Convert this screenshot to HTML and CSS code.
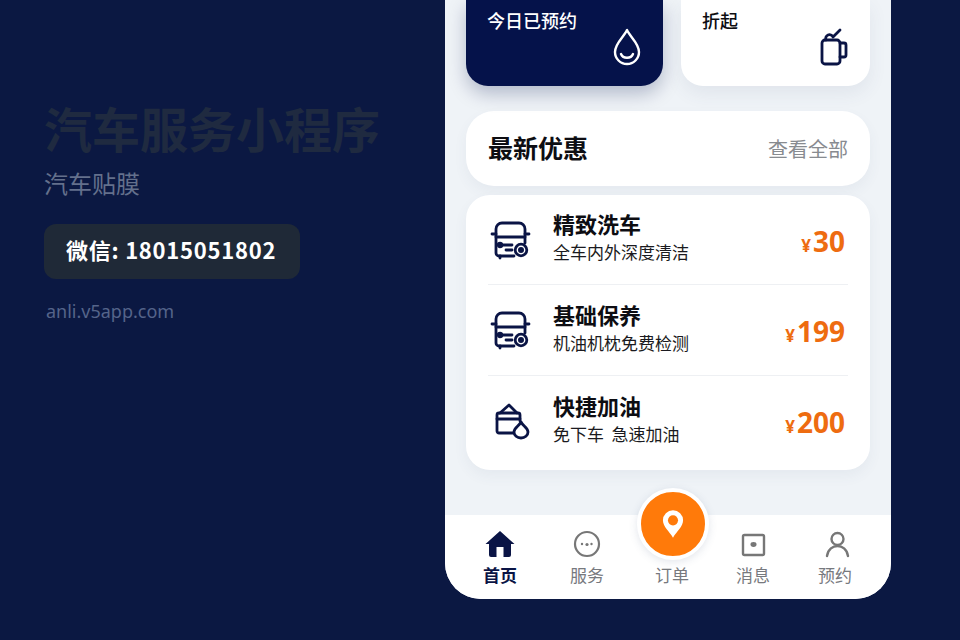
FILE: index.html
```html
<!DOCTYPE html>
<html lang="zh-CN">
<head>
    <meta charset="UTF-8">
    <title>汽车服务小程序</title>
    <link rel="stylesheet" href="styles.css">
</head>
<body>
    <div class="intro">
        <h1>汽车服务小程序</h1>
        <p class="subtitulo">汽车贴膜</p>
        <div class="wechat">微信: 18015051802</div>
        <p class="site">anli.v5app.com</p>
    </div>

    <div class="phone">
        <div class="content">
            <div class="top-cards">
                <div class="top-card dark">
                    <span>今日已预约</span>
                    <svg class="top-icon" width="28" height="38" viewBox="0 0 28 38" fill="none" stroke="#fff" stroke-width="2.4" stroke-linecap="round" stroke-linejoin="round">
                        <path d="M14 2 C11 9 2 15 2 24 A12 12 0 0 0 26 24 C26 15 17 9 14 2 Z"/>
                        <path d="M8 26 C10 31 18 31 20 26"/>
                    </svg>
                </div>
                <div class="top-card light">
                    <span>折起</span>
                    <svg class="top-icon" width="30" height="38" viewBox="0 0 30 38" fill="none" stroke="#0a1445" stroke-width="2.8" stroke-linecap="round" stroke-linejoin="round">
                        <rect x="4" y="12" width="18" height="24" rx="3"/>
                        <path d="M22 15 H26 A2 2 0 0 1 28 17 V27 A2 2 0 0 1 26 29 H22"/>
                        <path d="M8 12 A3.5 3.5 0 0 1 15 9 L22 2"/>
                    </svg>
                </div>
            </div>

            <div class="section-head">
                <h2>最新优惠</h2>
                <span>查看全部</span>
            </div>

            <div class="list">
                <div class="row">
                    <svg class="row-icon" width="42" height="42" viewBox="0 0 42 42" fill="none" stroke="#0a1445" stroke-width="2.8" stroke-linecap="round" stroke-linejoin="round">
                        <path d="M24 37 H9 A3 3 0 0 1 6 34 V10 A6 6 0 0 1 12 4 H29 A6 6 0 0 1 35 10 V24"/>
                        <path d="M6 18 H35"/>
                        <path d="M2 15 H6 M35 15 H39"/>
                        <path d="M11 26 H22 M16 31 H22"/>
                        <path d="M10 37 V39"/>
                        <circle cx="10" cy="26" r="1.8" fill="#0a1445"/>
                        <circle cx="31" cy="31" r="5.8" fill="#fff"/>
                        <circle cx="31" cy="31" r="1.6" fill="#0a1445"/>
                    </svg>
                    <div class="row-text">
                        <b>精致洗车</b>
                        <small>全车内外深度清洁</small>
                    </div>
                    <div class="price"><i>¥</i>30</div>
                </div>
                <div class="row">
                    <svg class="row-icon" width="42" height="42" viewBox="0 0 42 42" fill="none" stroke="#0a1445" stroke-width="2.8" stroke-linecap="round" stroke-linejoin="round">
                        <path d="M24 37 H9 A3 3 0 0 1 6 34 V10 A6 6 0 0 1 12 4 H29 A6 6 0 0 1 35 10 V24"/>
                        <path d="M6 18 H35"/>
                        <path d="M2 15 H6 M35 15 H39"/>
                        <path d="M11 26 H22 M16 31 H22"/>
                        <path d="M10 37 V39"/>
                        <circle cx="10" cy="26" r="1.8" fill="#0a1445"/>
                        <circle cx="31" cy="31" r="5.8" fill="#fff"/>
                        <circle cx="31" cy="31" r="1.6" fill="#0a1445"/>
                    </svg>
                    <div class="row-text">
                        <b>基础保养</b>
                        <small>机油机枕免费检测</small>
                    </div>
                    <div class="price"><i>¥</i>199</div>
                </div>
                <div class="row">
                    <svg class="row-icon" width="42" height="42" viewBox="0 0 42 42" fill="none" stroke="#0a1445" stroke-width="2.8" stroke-linecap="round" stroke-linejoin="round">
                        <path d="M23 33 H9 A2 2 0 0 1 7 31 V15 A2 2 0 0 1 9 13 H28 A2 2 0 0 1 30 15 V21"/>
                        <path d="M7 19 H30"/>
                        <path d="M10 13 L19 5 L27 13"/>
                        <path d="M31 22 C29 26 24 28 24 32 A7 6 0 0 0 38 32 C38 28 33 26 31 22 Z"/>
                    </svg>
                    <div class="row-text">
                        <b>快捷加油</b>
                        <small>免下车&nbsp;&nbsp;急速加油</small>
                    </div>
                    <div class="price"><i>¥</i>200</div>
                </div>
            </div>
        </div>

        <div class="tabbar">
            <div class="tab active">
                <svg width="32" height="30" viewBox="0 0 32 30">
                    <path d="M16 2 L30.500 15 H27 V26 A2 2 0 0 1 25 28 H19.500 V18 H12.500 V28 H7 A2 2 0 0 1 5 26 V15 H1.500 Z" fill="#0a1445"/>
                </svg>
                <span>首页</span>
            </div>
            <div class="tab">
                <svg width="30" height="30" viewBox="0 0 30 30" fill="none" stroke="#777" stroke-width="2.200">
                    <circle cx="15" cy="15" r="12"/>
                    <circle cx="10" cy="15" r="1.200" fill="#777" stroke="none"/>
                    <circle cx="15" cy="15.500" r="1.600" fill="#777" stroke="none"/>
                    <circle cx="19.500" cy="15" r="1.200" fill="#777" stroke="none"/>
                </svg>
                <span>服务</span>
            </div>
            <div class="tab">
                <div class="tab-spacer"></div>
                <span>订单</span>
            </div>
            <div class="tab">
                <svg width="30" height="30" viewBox="0 0 30 30" fill="none" stroke="#777" stroke-width="2.400">
                    <rect x="5" y="6" width="21" height="20" rx="1.500"/>
                    <ellipse cx="15.500" cy="15.500" rx="3" ry="2.400" fill="#777" stroke="none"/>
                </svg>
                <span>消息</span>
            </div>
            <div class="tab">
                <svg width="30" height="30" viewBox="0 0 30 30" fill="none" stroke="#777" stroke-width="2.400" stroke-linecap="round">
                    <circle cx="17.500" cy="10" r="6"/>
                    <path d="M7 27 C8 20 13 17 17.500 17 C22 17 27 20 28 27"/>
                </svg>
                <span>预约</span>
            </div>
            <div class="center-btn">
                <svg width="22" height="30" viewBox="0 0 24 32">
                    <path d="M12 1 A11 11 0 0 0 1 12 C1 19 8 24 12 31 C16 24 23 19 23 12 A11 11 0 0 0 12 1 Z" fill="#fff"/>
                    <circle cx="12" cy="12" r="5.500" fill="#ff7a0a"/>
                </svg>
            </div>
        </div>
    </div>
</body>
</html>
```

FILE: styles.css
```css
* {
    box-sizing: border-box;
}

body {
    margin: 0;
    width: 960px;
    height: 640px;
    overflow: hidden;
    display: flex;
    background-color: #0b1842;
    font-family: "Noto Sans CJK SC", "Noto Sans", sans-serif;
}

.intro {
    width: 445px;
    flex-shrink: 0;
    padding: 92px 0 0 44px;
}

h1 {
    margin: 0;
    font-size: 48px;
    line-height: 70px;
    font-weight: 700;
    color: #1f2a40;
}

.subtitulo {
    margin: 3px 0 0;
    font-size: 24px;
    line-height: 36px;
    color: #64708c;
}

.wechat {
    margin-top: 23px;
    width: 256px;
    height: 55px;
    padding-left: 22px;
    background-color: #1f2937;
    border-radius: 12px;
    color: white;
    font-size: 22px;
    font-weight: 700;
    letter-spacing: 0.75px;
    line-height: 50px;
}

.site {
    margin: 18px 0 0 2px;
    font-family: "Noto Sans", sans-serif;
    font-size: 18px;
    line-height: 28px;
    color: #55648a;
}

.phone {
    position: relative;
    width: 446px;
    height: 599px;
    display: flex;
    flex-direction: column;
    justify-content: flex-end;
    background-color: #eff3f7;
    border-radius: 0 0 36px 36px;
    overflow: hidden;
}

.content {
    padding: 0 21px 45px;
}

.top-cards {
    display: flex;
    gap: 18px;
}

.top-card {
    position: relative;
    height: 86px;
    padding-top: 6px;
    border-radius: 0 0 22px 22px;
    font-size: 18px;
    font-weight: 500;
    line-height: 28px;
}

.top-card.dark {
    width: 197px;
    padding-left: 21px;
    background-color: #05124a;
    color: white;
    box-shadow: 0 8px 18px rgba(5, 18, 74, 0.25);
}

.top-card.light {
    width: 189px;
    padding-left: 21px;
    background-color: white;
    color: #0d0d12;
    box-shadow: 0 8px 18px rgba(60, 80, 120, 0.08);
}

.top-icon {
    position: absolute;
    top: 28px;
    right: 22px;
}

.section-head {
    margin-top: 25px;
    height: 75px;
    padding: 0 22px;
    display: flex;
    justify-content: space-between;
    align-items: center;
    background-color: white;
    border-radius: 28px;
    box-shadow: 0 6px 14px rgba(60, 80, 120, 0.06);
}

h2 {
    margin: 0 0 4px;
    font-size: 25px;
    font-weight: 700;
    color: #0d0d12;
}

.section-head span {
    font-size: 20px;
    color: #888b90;
}

.list {
    margin-top: 9px;
    height: 275px;
    padding: 0 22px;
    background-color: white;
    border-radius: 24px;
    box-shadow: 0 6px 14px rgba(60, 80, 120, 0.06);
}

.row {
    height: 90px;
    display: flex;
    align-items: center;
    border-bottom: 1px solid #eef0f3;
}

.row:nth-child(2) {
    height: 91px;
}

.row:last-child {
    height: 94px;
    padding-bottom: 4px;
    border-bottom: none;
}

.row-icon {
    flex-shrink: 0;
    margin-left: 2px;
}

.row-text {
    flex: 1;
    margin-left: 21px;
    padding-bottom: 7px;
    display: flex;
    flex-direction: column;
}

.row-text b {
    font-size: 22px;
    line-height: 31px;
    color: #0d0d12;
}

.row-text small {
    margin-top: 1px;
    font-size: 17px;
    line-height: 24px;
    color: #1a1a20;
}

.price {
    margin-right: 3px;
    padding-top: 2px;
    font-family: "Noto Sans", sans-serif;
    font-size: 28px;
    font-weight: 700;
    color: #ee6c10;
}

.price i {
    margin-right: 2px;
    font-style: normal;
    font-size: 17px;
}

.tabbar {
    position: relative;
    height: 84px;
    padding: 14px 14px 0 12px;
    display: grid;
    grid-template-columns: 86px 88px 82px 80px 84px;
    background-color: white;
}

.tab {
    display: flex;
    flex-direction: column;
    align-items: center;
    font-size: 17px;
    line-height: 26px;
    color: #77797e;
}

.tab svg,
.tab-spacer {
    height: 30px;
    margin-bottom: 3px;
}

.tab.active {
    color: #0a1445;
    font-weight: 700;
}

.center-btn {
    position: absolute;
    left: 192px;
    top: -27px;
    width: 72px;
    height: 72px;
    display: flex;
    justify-content: center;
    align-items: center;
    background-color: #ff7a0a;
    border: 4px solid white;
    border-radius: 50%;
    box-shadow: 0 2px 8px rgba(60, 80, 120, 0.15);
}
```
